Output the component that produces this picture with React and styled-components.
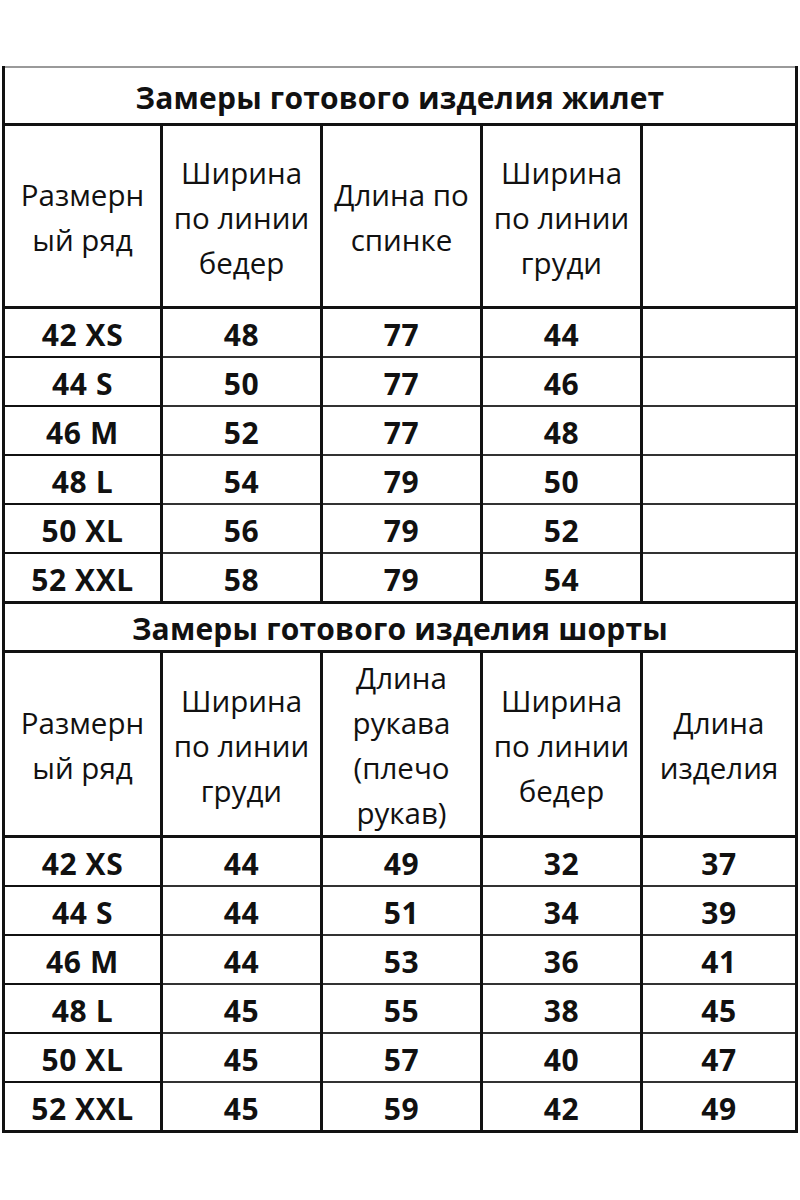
import React from 'react';
import styled, { createGlobalStyle } from 'styled-components';

const GlobalStyle = createGlobalStyle`
  body {
    margin: 0;
    background: #ffffff;
    font-family: "Open Sans", "Liberation Sans", sans-serif;
    color: #111111;
  }
`;

const Page = styled.div`
  width: 800px;
  padding-top: 66px;
  padding-bottom: 72px;
`;

const Sheet = styled.table`
  width: 796px;
  margin-left: 2px;
  border-collapse: collapse;
  table-layout: fixed;
  border-left: 3px solid #111;
  border-right: 3px solid #111;
  border-top: 2px solid #9a9a9a;
  border-bottom: 3px solid #111;
`;

const Col = styled.col`
  width: ${(p) => (p.$w ? `${p.$w}px` : 'auto')};
`;

const TitleCell = styled.td`
  height: ${(p) => p.$h}px;
  padding: 3px 0 0;
  text-align: center;
  font-size: 30px;
  font-weight: 700;
  letter-spacing: 0.2px;
  border-top: ${(p) => (p.$first ? '0' : '3px solid #111')};
  border-bottom: 3px solid #111;
`;

const HeadCell = styled.td`
  height: 178px;
  padding: 2px 0 0;
  text-align: center;
  vertical-align: middle;
  font-size: 29.5px;
  line-height: 45px;
  font-weight: 400;
  white-space: nowrap;
  border-right: 3px solid #111;
  border-bottom: 3px solid #111;
  &:last-child {
    border-right: 0;
  }
`;

const HeadLine = styled.div`
  display: block;
`;

const DataCell = styled.td`
  height: 44px;
  padding: 3px 0 0;
  text-align: center;
  font-size: 30px;
  font-weight: 700;
  letter-spacing: 0.6px;
  white-space: nowrap;
  border-right: 3px solid #111;
  border-bottom: 2px solid #333;
  &:first-child {
    border-bottom-color: #111;
  }
  &:last-child {
    border-right: 0;
  }
`;

const vest = {
  title: 'Замеры готового изделия жилет',
  heads: [
    ['Размерн', 'ый ряд'],
    ['Ширина', 'по линии', 'бедер'],
    ['Длина по', 'спинке'],
    ['Ширина', 'по линии', 'груди'],
    [],
  ],
  rows: [
    ['42 XS', '48', '77', '44', ''],
    ['44 S', '50', '77', '46', ''],
    ['46 M', '52', '77', '48', ''],
    ['48 L', '54', '79', '50', ''],
    ['50 XL', '56', '79', '52', ''],
    ['52 XXL', '58', '79', '54', ''],
  ],
};

const shorts = {
  title: 'Замеры готового изделия шорты',
  heads: [
    ['Размерн', 'ый ряд'],
    ['Ширина', 'по линии', 'груди'],
    ['Длина', 'рукава', '(плечо', 'рукав)'],
    ['Ширина', 'по линии', 'бедер'],
    ['Длина', 'изделия'],
  ],
  rows: [
    ['42 XS', '44', '49', '32', '37'],
    ['44 S', '44', '51', '34', '39'],
    ['46 M', '44', '53', '36', '41'],
    ['48 L', '45', '55', '38', '45'],
    ['50 XL', '45', '57', '40', '47'],
    ['52 XXL', '45', '59', '42', '49'],
  ],
};

function Section({ data, first }) {
  return (
    <>
      <tr>
        <TitleCell colSpan={5} $first={first} $h={first ? 52 : 43}>
          {data.title}
        </TitleCell>
      </tr>
      <tr>
        {data.heads.map((lines, i) => (
          <HeadCell key={i}>
            {lines.map((l, j) => (
              <HeadLine key={j}>{l}</HeadLine>
            ))}
          </HeadCell>
        ))}
      </tr>
      {data.rows.map((row, i) => (
        <tr key={i}>
          {row.map((v, j) => (
            <DataCell key={j}>{v}</DataCell>
          ))}
        </tr>
      ))}
    </>
  );
}

export default function App() {
  return (
    <Page>
      <GlobalStyle />
      <Sheet>
        <colgroup>
          <Col $w={158} />
          <Col $w={160} />
          <Col $w={160} />
          <Col $w={160} />
          <Col />
        </colgroup>
        <tbody>
          <Section data={vest} first />
          <Section data={shorts} />
        </tbody>
      </Sheet>
    </Page>
  );
}
